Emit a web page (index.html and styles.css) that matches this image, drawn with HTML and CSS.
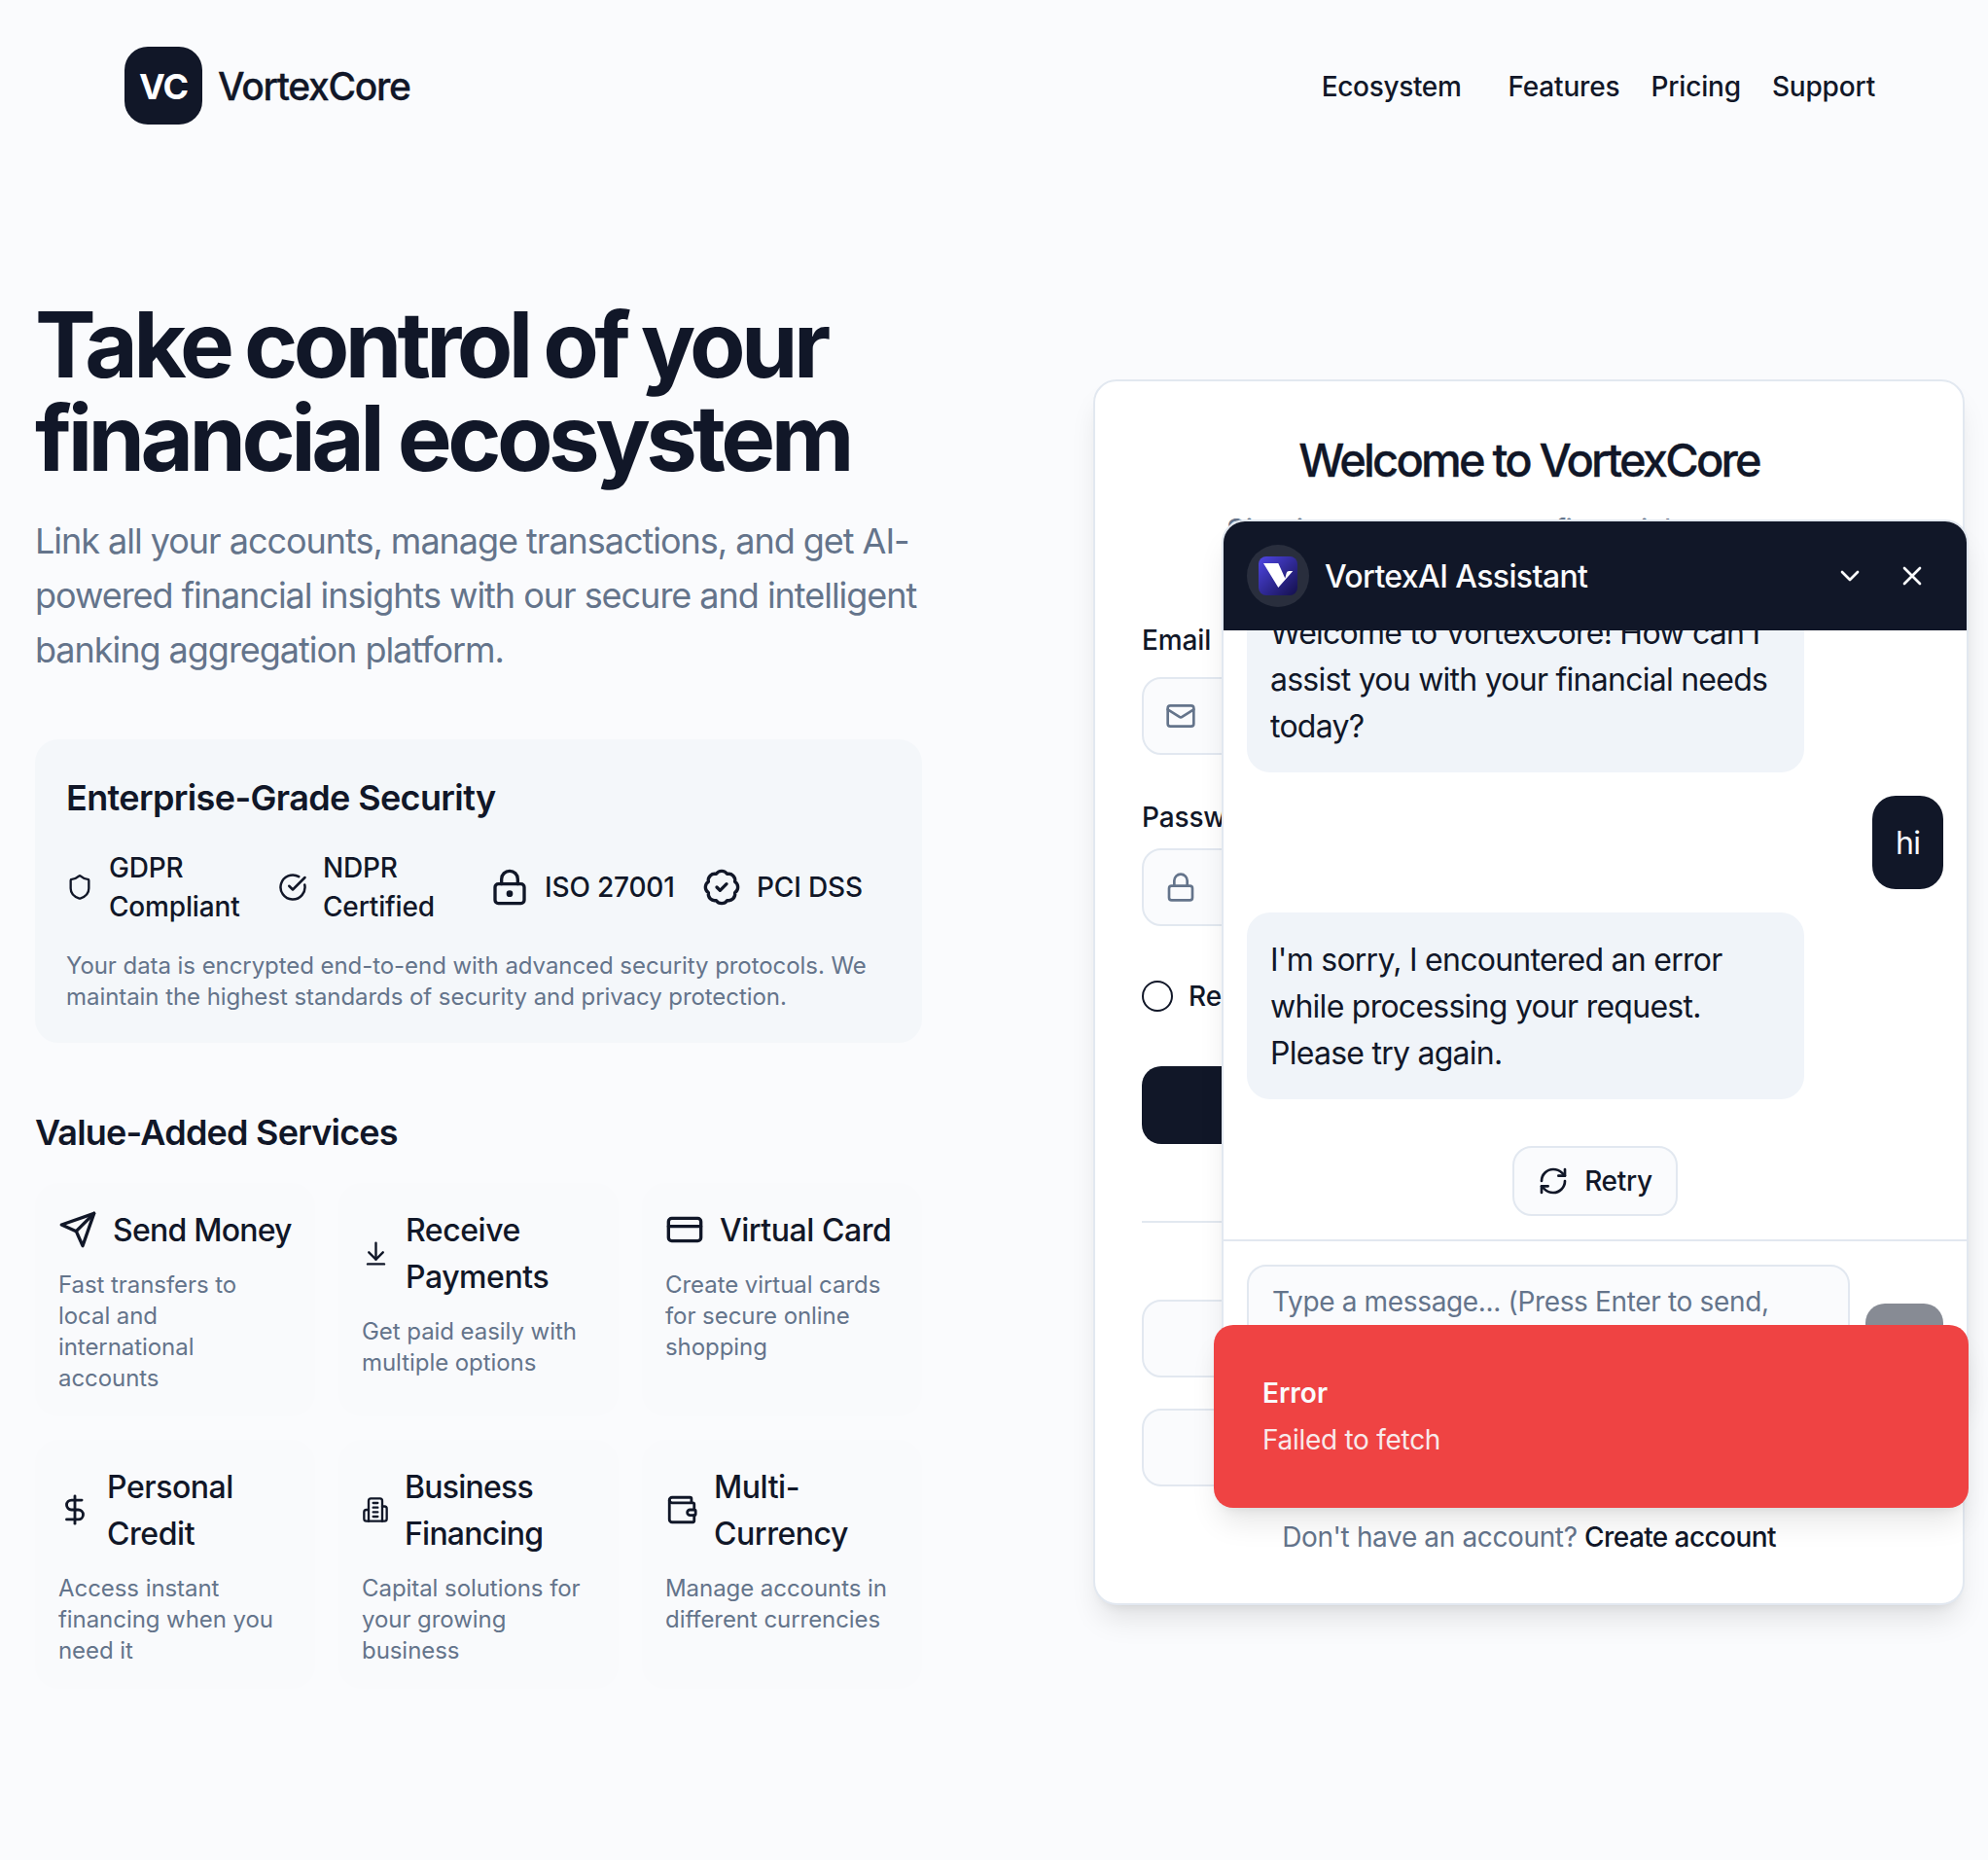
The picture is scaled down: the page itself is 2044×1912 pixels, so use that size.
FILE: index.html
```html
<!DOCTYPE html>
<html lang="en">
<head>
<meta charset="utf-8">
<title>VortexCore</title>
<link rel="stylesheet" href="styles.css">
</head>
<body>
<header class="site-header">
  <a class="brand"><span class="brand-mark">VC</span><span class="brand-name">VortexCore</span></a>
  <nav class="site-nav">
    <a class="nav-link nav-link-menu">Ecosystem</a>
    <a class="nav-link">Features</a>
    <a class="nav-link">Pricing</a>
    <a class="nav-link">Support</a>
  </nav>
</header>

<main class="main">
  <section class="intro">
    <h1 class="hero-title"><span class="hero-line hero-line-first">Take control of your</span><span class="hero-line">financial ecosystem</span></h1>
    <p class="hero-text">Link all your accounts, manage transactions, and get AI-<br>powered financial insights with our secure and intelligent<br>banking aggregation platform.</p>

    <section class="security">
      <h2 class="section-title">Enterprise-Grade Security</h2>
      <div class="badges">
        <div class="badge">
          <svg class="icon" width="28" height="28" viewBox="0 0 24 24"><path d="M20 13c0 5-3.5 7.5-7.66 8.95a1 1 0 0 1-.67-.01C7.5 20.5 4 18 4 13V6a1 1 0 0 1 1-1c2 0 4.5-1.2 6.24-2.72a1.17 1.17 0 0 1 1.52 0C14.51 3.81 17 5 19 5a1 1 0 0 1 1 1z"/></svg>
          <span>GDPR<br>Compliant</span>
        </div>
        <div class="badge">
          <svg class="icon" width="30" height="30" viewBox="0 0 24 24"><path d="M21.801 10A10 10 0 1 1 17 3.335"/><path d="m9 11 3 3L22 4"/></svg>
          <span>NDPR<br>Certified</span>
        </div>
        <div class="badge">
          <svg class="icon" width="40" height="40" viewBox="0 0 24 24"><circle cx="12" cy="16" r="1"/><rect x="3" y="10" width="18" height="12" rx="2"/><path d="M7 10V7a5 5 0 0 1 10 0v3"/></svg>
          <span>ISO 27001</span>
        </div>
        <div class="badge">
          <svg class="icon" width="40" height="40" viewBox="0 0 24 24"><path d="M3.85 8.62a4 4 0 0 1 4.78-4.77 4 4 0 0 1 6.74 0 4 4 0 0 1 4.78 4.78 4 4 0 0 1 0 6.74 4 4 0 0 1-4.77 4.78 4 4 0 0 1-6.75 0 4 4 0 0 1-4.78-4.77 4 4 0 0 1 0-6.76Z"/><path d="m9 12 2 2 4-4"/></svg>
          <span>PCI DSS</span>
        </div>
      </div>
      <p class="small-text">Your data is encrypted end-to-end with advanced security protocols. We<br>maintain the highest standards of security and privacy protection.</p>
    </section>

    <section class="services">
      <h2 class="section-title">Value-Added Services</h2>
      <div class="service-grid">
        <article class="service">
          <h3 class="service-title service-title-tight"><svg class="icon" width="40" height="40" viewBox="0 0 24 24"><path d="m22 2-7 20-4-9-9-4Z"/><path d="M22 2 11 13"/></svg><span class="service-name">Send Money</span></h3>
          <p class="small-text">Fast transfers to<br>local and<br>international<br>accounts</p>
        </article>
        <article class="service">
          <h3 class="service-title"><svg class="icon" width="29" height="29" viewBox="0 0 24 24"><path d="M12 17V3"/><path d="m6 11 6 6 6-6"/><path d="M19 21H5"/></svg><span class="service-name">Receive<br>Payments</span></h3>
          <p class="small-text">Get paid easily with<br>multiple options</p>
        </article>
        <article class="service">
          <h3 class="service-title"><svg class="icon" width="40" height="40" viewBox="0 0 24 24"><rect x="2" y="5" width="20" height="14" rx="2"/><path d="M2 10h20"/></svg><span class="service-name">Virtual Card</span></h3>
          <p class="small-text">Create virtual cards<br>for secure online<br>shopping</p>
        </article>
        <article class="service">
          <h3 class="service-title"><svg class="icon" width="34" height="34" viewBox="0 0 24 24"><path d="M12 2v20"/><path d="M17 5H9.5a3.5 3.5 0 0 0 0 7h5a3.5 3.5 0 0 1 0 7H6"/></svg><span class="service-name">Personal<br>Credit</span></h3>
          <p class="small-text">Access instant<br>financing when you<br>need it</p>
        </article>
        <article class="service">
          <h3 class="service-title service-title-tight"><svg class="icon" width="28" height="28" viewBox="0 0 24 24"><path d="M6 22V4a2 2 0 0 1 2-2h8a2 2 0 0 1 2 2v18Z"/><path d="M6 12H4a2 2 0 0 0-2 2v6a2 2 0 0 0 2 2h2"/><path d="M18 9h2a2 2 0 0 1 2 2v9a2 2 0 0 1-2 2h-2"/><path d="M10 6h4M10 10h4M10 14h4M10 18h4"/></svg><span class="service-name">Business<br>Financing</span></h3>
          <p class="small-text">Capital solutions for<br>your growing<br>business</p>
        </article>
        <article class="service">
          <h3 class="service-title"><svg class="icon" width="34" height="34" viewBox="0 0 24 24"><path d="M19 7V4a1 1 0 0 0-1-1H5a2 2 0 0 0 0 4h15a1 1 0 0 1 1 1v4h-3a2 2 0 0 0 0 4h3a1 1 0 0 0 1-1v-2a1 1 0 0 0-1-1"/><path d="M3 5v14a2 2 0 0 0 2 2h15a1 1 0 0 0 1-1v-4"/></svg><span class="service-name">Multi-<br>Currency</span></h3>
          <p class="small-text">Manage accounts in<br>different currencies</p>
        </article>
      </div>
    </section>
  </section>

  <section class="login">
    <h2 class="login-title">Welcome to VortexCore</h2>
    <p class="login-text">Sign in to manage your financial ecosystem</p>
    <label class="label">Email</label>
    <div class="field field-email"><svg class="icon" width="32" height="32" viewBox="0 0 24 24"><rect x="2" y="4" width="20" height="16" rx="2"/><path d="m22 7-8.97 5.7a1.94 1.94 0 0 1-2.06 0L2 7"/></svg></div>
    <label class="label label-password">Password</label>
    <div class="field field-password"><svg class="icon" width="32" height="32" viewBox="0 0 24 24"><rect x="3" y="11" width="18" height="11" rx="2"/><path d="M7 11V7a5 5 0 0 1 10 0v4"/></svg></div>
    <div class="remember"><span class="remember-box"></span><span>Remember me</span></div>
    <div class="submit"></div>
    <div class="divider"></div>
    <div class="social"></div>
    <div class="social social-second"></div>
    <p class="signup">Don't have an account? <a class="signup-link">Create account</a></p>
  </section>
</main>

<aside class="chat">
  <div class="chat-header">
    <span class="avatar">
      <svg width="40" height="40" viewBox="0 0 40 40"><defs><linearGradient id="logo" x1="0" y1="0" x2="1" y2="1"><stop offset="0" stop-color="#4f46e5"/><stop offset="1" stop-color="#130f4b"/></linearGradient></defs><rect width="40" height="40" rx="8" fill="url(#logo)"/><path d="M5 7h15.300l7 15.500 1.400-5.500q.6-2 2.600-2h4L20.300 32Z" fill="#fff"/></svg>
    </span>
    <span class="chat-title">VortexAI Assistant</span>
    <svg class="icon" width="32" height="32" viewBox="0 0 24 24"><path d="m6 9 6 6 6-6"/></svg>
    <svg class="icon" width="32" height="32" viewBox="0 0 24 24"><path d="M18 6 6 18M6 6l12 12"/></svg>
  </div>
  <div class="messages">
    <div class="bubble">Welcome to VortexCore! How can I<br>assist you with your financial needs<br>today?</div>
    <div class="bubble bubble-user">hi</div>
    <div class="bubble">I'm sorry, I encountered an error<br>while processing your request.<br>Please try again.</div>
    <div class="retry"><svg class="icon" width="32" height="32" viewBox="0 0 24 24"><path d="M3 12a9 9 0 0 1 9-9 9.750 9.750 0 0 1 6.740 2.740L21 8"/><path d="M21 3v5h-5"/><path d="M21 12a9 9 0 0 1-9 9 9.750 9.750 0 0 1-6.740-2.740L3 16"/><path d="M8 16H3v5"/></svg><span>Retry</span></div>
  </div>
  <div class="composer">
    <div class="composer-input">Type a message... (Press Enter to send,</div>
    <div class="composer-send"></div>
  </div>
</aside>

<div class="toast">
  <div class="toast-title">Error</div>
  <div class="toast-text">Failed to fetch</div>
</div>
</body>
</html>
```
FILE: styles.css
```css
* { box-sizing: border-box; }

body {
  margin: 0;
  height: 1912px;
  position: relative;
  overflow: hidden;
  background: #fafbfd;
  color: #111728;
  font-family: "Inter", "Liberation Sans", sans-serif;
  font-size: 28px;
  line-height: 40px;
}

h1, h2, h3, p { margin: 0; }

.icon {
  display: block;
  flex: none;
  fill: none;
  stroke: currentColor;
  stroke-width: 2;
  stroke-linecap: round;
  stroke-linejoin: round;
}

/* Header */
.site-header {
  display: flex;
  align-items: center;
  justify-content: space-between;
  height: 176px;
  padding: 0 116px 0 128px;
}
.brand { display: flex; align-items: center; gap: 16px; }
.brand-mark {
  display: flex;
  align-items: center;
  justify-content: center;
  width: 80px;
  height: 80px;
  padding-top: 1px;
  border-radius: 24px;
  background: #111728;
  color: #fff;
  font-size: 36px;
  font-weight: 700;
  letter-spacing: -0.03em;
}
.brand-name { padding-top: 2px; font-size: 39px; font-weight: 500; letter-spacing: -0.0345em; -webkit-text-stroke: 0.3px; }
.site-nav { display: flex; gap: 32px; padding-top: 1px; }
.nav-link { font-weight: 500; letter-spacing: -0.006em; }
.nav-link-menu { margin-right: 16px; letter-spacing: -0.012em; }

/* Page columns */
.main {
  display: grid;
  grid-template-columns: 912px 896px;
  justify-content: space-between;
  align-items: center;
  padding: 128px 24px 0 36px;
}

.hero-title { padding-top: 2px; font-size: 94px; line-height: 96px; font-weight: 700; letter-spacing: -0.0485em; }
.hero-line { display: block; white-space: nowrap; }
.hero-line-first { letter-spacing: -0.0495em; word-spacing: -0.03em; }
.hero-text {
  margin-top: 30px;
  color: #64748b;
  font-size: 36px;
  line-height: 56px;
  letter-spacing: -0.0285em;
  white-space: nowrap;
}

.section-title { font-size: 36px; line-height: 56px; font-weight: 600; letter-spacing: -0.0175em; }
.small-text { color: #64748b; font-size: 24px; line-height: 32px; letter-spacing: -0.0025em; white-space: nowrap; }

.security {
  margin-top: 64px;
  padding: 32px 32px 31px;
  border-radius: 24px;
  background: #f4f7fa;
}
.badges {
  display: grid;
  grid-template-columns: repeat(4, 194px);
  gap: 24px;
  margin: 24px 0 25px;
}
.badge { display: flex; align-items: center; gap: 16px; height: 80px; font-weight: 500; letter-spacing: -0.006em; white-space: nowrap; }

.services { margin-top: 64px; }
.services .section-title { letter-spacing: -0.022em; }
.service-grid {
  display: grid;
  grid-template-columns: repeat(3, 288px);
  gap: 24px;
  margin-top: 24px;
}
.service { padding: 23px 24px; border-radius: 24px; background: #f9fafc; }
.service-title {
  display: flex;
  align-items: center;
  gap: 16px;
  margin-bottom: 16px;
  font-size: 32px;
  line-height: 48px;
  font-weight: 500;
  letter-spacing: -0.014em;
  white-space: nowrap;
}
.service-title-tight { letter-spacing: -0.024em; }
.service-name { padding-top: 2px; }

/* Sign-in card */
.login {
  height: 1260px;
  padding: 57px 48px 47px;
  border: 2px solid #e2e8f0;
  border-radius: 24px;
  background: #fff;
  box-shadow: 0 20px 30px -6px rgba(0, 0, 0, 0.1), 0 8px 12px -8px rgba(0, 0, 0, 0.1);
}
.login-title {
  font-size: 47px;
  line-height: 48px;
  font-weight: 500;
  letter-spacing: -0.0595em;
  text-align: center;
  -webkit-text-stroke: 0.3px;
}
.login-text { margin-top: 25px; color: #64748b; font-size: 32px; line-height: 48px; letter-spacing: -0.026em; text-align: center; }
.label { display: block; margin-top: 68px; font-weight: 500; letter-spacing: -0.005em; }
.label-password { margin-top: 44px; }
.field {
  display: flex;
  align-items: center;
  height: 80px;
  padding: 0 22px;
  border: 2px solid #e2e8f0;
  border-radius: 20px;
  background: #fafbfd;
  color: #64748b;
}
.field-email { margin-top: 18px; }
.field-password { margin-top: 12px; }
.remember { display: flex; align-items: center; gap: 16px; margin-top: 52px; font-weight: 500; }
.remember-box { width: 32px; height: 32px; border: 2px solid #111728; border-radius: 50%; }
.submit { height: 80px; margin-top: 52px; border-radius: 20px; background: #111728; }
.divider { height: 2px; margin-top: 79px; background: #e2e8f0; }
.social { height: 80px; margin-top: 79px; border: 2px solid #e2e8f0; border-radius: 20px; background: #fafbfd; }
.social-second { margin-top: 32px; }
.signup { margin-top: 32px; color: #64748b; letter-spacing: -0.013em; text-align: center; }
.signup-link { color: #111728; font-weight: 500; letter-spacing: -0.021em; }

/* Assistant window, floats over the page */
.chat {
  position: absolute;
  top: 534px;
  right: 20px;
  display: flex;
  flex-direction: column;
  width: 768px;
  height: 912px;
  overflow: hidden;
  border: 2px solid #e2e8f0;
  border-radius: 24px;
  background: #fff;
  box-shadow: 0 20px 30px -6px rgba(0, 0, 0, 0.1), 0 8px 12px -8px rgba(0, 0, 0, 0.1);
}
.chat-header {
  display: flex;
  flex: none;
  align-items: center;
  gap: 32px;
  height: 112px;
  padding: 0 40px 0 24px;
  background: #111728;
  color: #fafbfd;
}
.avatar {
  display: flex;
  align-items: center;
  justify-content: center;
  width: 64px;
  height: 64px;
  border-radius: 50%;
  background: rgba(255, 255, 255, 0.1);
}
.chat-title { flex: 1; margin-left: -16px; padding-top: 2px; font-size: 32px; font-weight: 500; letter-spacing: -0.019em; }
.messages {
  display: flex;
  flex: 1;
  flex-direction: column;
  justify-content: flex-end;
  gap: 24px;
  min-height: 0;
  padding: 0 24px 24px;
  overflow: hidden;
}
.bubble {
  flex: none;
  width: 573px;
  padding: 25px 24px 23px;
  border-radius: 24px;
  background: #f0f4f9;
  font-size: 32px;
  line-height: 48px;
  letter-spacing: -0.0233em;
  white-space: nowrap;
}
.bubble-user { align-self: flex-end; width: 73px; background: #111728; color: #fafbfd; }
.retry {
  display: flex;
  flex: none;
  align-self: center;
  align-items: center;
  gap: 16px;
  height: 72px;
  margin-top: 24px;
  padding: 0 24px;
  border: 2px solid #e2e8f0;
  border-radius: 20px;
  background: #fafbfd;
  font-weight: 500;
  letter-spacing: -0.01em;
}
.composer {
  display: flex;
  flex: none;
  align-items: flex-end;
  gap: 16px;
  padding: 24px;
  border-top: 2px solid #e2e8f0;
}
.composer-input {
  flex: 1;
  height: 120px;
  padding: 16px 24px;
  border: 2px solid #e2e8f0;
  border-radius: 20px;
  background: #fafbfd;
  color: #64748b;
  letter-spacing: -0.0122em;
  white-space: nowrap;
}
.composer-send { width: 80px; height: 80px; border-radius: 20px; background: #878b94; }

/* Error notification, floats over the assistant */
.toast {
  position: absolute;
  top: 1362px;
  right: 20px;
  width: 776px;
  height: 188px;
  padding: 50px;
  border-radius: 20px;
  background: #ef4343;
  color: #fafbfd;
  box-shadow: 0 20px 30px -6px rgba(0, 0, 0, 0.1), 0 8px 12px -8px rgba(0, 0, 0, 0.1);
}
.toast-title { font-weight: 600; }
.toast-text { margin-top: 8px; opacity: 0.9; letter-spacing: -0.01em; }
```
